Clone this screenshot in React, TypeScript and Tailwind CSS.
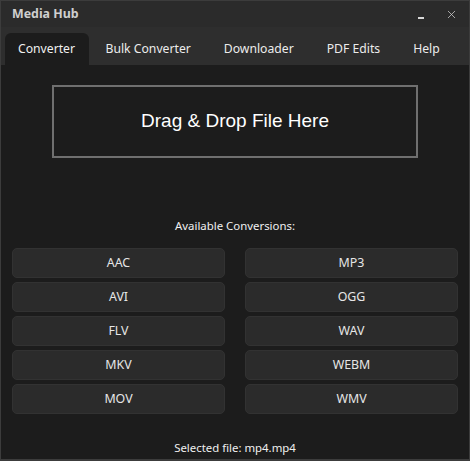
import { X } from 'lucide-react';

const formats: [string, string][] = [
  ['AAC', 'MP3'],
  ['AVI', 'OGG'],
  ['FLV', 'WAV'],
  ['MKV', 'WEBM'],
  ['MOV', 'WMV'],
];

const tabs = ['Converter', 'Bulk Converter', 'Downloader', 'PDF Edits', 'Help'];

export default function App() {
  return (
    <div className="w-[470px] h-[461px] bg-[#1c1c1c] border border-[#3c3c3c] border-b-2 flex flex-col overflow-hidden font-['Noto_Sans',sans-serif] text-[#e6e6e6]">
      {/* title bar */}
      <div className="h-[26px] bg-[#2b2b2b] flex items-center pl-[11px] pr-[11px] flex-shrink-0">
        <span className="text-[12.4px] font-bold text-[#cfcfcf]">Media Hub</span>
        <div className="ml-auto flex items-center gap-[21px]">
          <span className="w-[6px] h-[2px] bg-[#d8d8d8] mt-[8px]"></span>
          <X size={13} strokeWidth={1.4} className="text-[#d0d0d0]" />
        </div>
      </div>

      {/* tabs */}
      <div className="h-[38px] bg-[#2e2e2e] flex items-end pl-[4px] flex-shrink-0">
        {tabs.map((t, i) => (
          <div
            key={t}
            className={
              i === 0
                ? 'h-[32px] pl-[13px] pr-[14px] bg-[#1c1c1c] rounded-t-[6px] flex items-center whitespace-nowrap text-[12.2px] text-[#f0f0f0]'
                : 'h-[32px] px-[16.5px] flex items-center whitespace-nowrap text-[12.2px] text-[#ececec]'
            }
          >
            {t}
          </div>
        ))}
      </div>

      {/* content */}
      <div className="flex-1 flex flex-col">
        <div className="mt-[20px] mx-[51px] h-[73px] border-2 border-[#6f6f6f] flex items-center justify-center">
          <span className="text-[19px] text-white font-['Liberation_Sans',Arial,sans-serif]">Drag &amp; Drop File Here</span>
        </div>

        <div className="mt-[59px] text-center text-[11.4px] text-[#f0f0f0]">Available Conversions:</div>

        <div className="mt-[14px] px-[11px] grid grid-cols-2 gap-x-[20px] gap-y-[4px]">
          {formats.flat().map((f) => (
            <div
              key={f}
              className="h-[30px] bg-[#2b2b2b] border border-[#323232] rounded-[5px] flex items-center justify-center text-[12.4px] text-[#e6e6e6]"
            >
              {f}
            </div>
          ))}
        </div>

        <div className="mt-auto mb-[3px] text-center text-[11.4px] text-[#f0f0f0]">Selected file: mp4.mp4</div>
      </div>
    </div>
  );
}
